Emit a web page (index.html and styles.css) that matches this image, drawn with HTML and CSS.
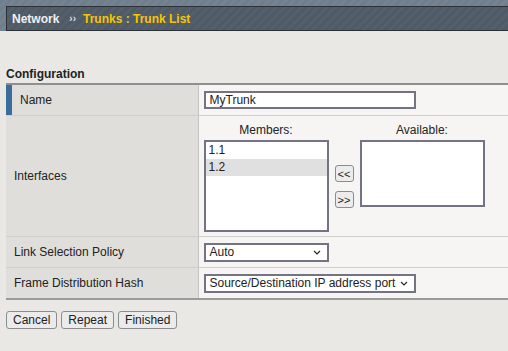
FILE: index.html
```html
<!DOCTYPE html>
<html>
<head>
<meta charset="utf-8">
<link rel="stylesheet" href="styles.css">
</head>
<body>
<div class="topbar">
  <div class="crumbs">
    <span class="crumb-root">Network</span>
    <span class="crumb-sep">››</span>
    <span class="crumb-page">Trunks : Trunk List</span>
  </div>
</div>
<div class="content">
  <div class="section-title">Configuration</div>
  <table class="config">
    <colgroup><col class="col-label"><col class="col-value"></colgroup>
    <tr class="row first">
      <td class="label marked">Name</td>
      <td class="value"><div class="textbox">MyTrunk</div></td>
    </tr>
    <tr class="row">
      <td class="label">Interfaces</td>
      <td class="value">
        <div class="picker">
          <div class="pick-col">
            <div class="pick-title">Members:</div>
            <div class="listbox members">
              <div class="opt">1.1</div>
              <div class="opt selected">1.2</div>
            </div>
          </div>
          <div class="move-col">
            <button class="move">&lt;&lt;</button>
            <button class="move">&gt;&gt;</button>
          </div>
          <div class="pick-col">
            <div class="pick-title">Available:</div>
            <div class="listbox available"></div>
          </div>
        </div>
      </td>
    </tr>
    <tr class="row">
      <td class="label">Link Selection Policy</td>
      <td class="value">
        <div class="dropdown short"><span>Auto</span>
          <svg class="chev" width="8" height="5" viewBox="0 0 8 5"><path d="M1 1 L4 4 L7 1" fill="none" stroke="#222" stroke-width="1.1"/></svg>
        </div>
      </td>
    </tr>
    <tr class="row last">
      <td class="label">Frame Distribution Hash</td>
      <td class="value">
        <div class="dropdown long"><span>Source/Destination IP address port</span>
          <svg class="chev" width="8" height="5" viewBox="0 0 8 5"><path d="M1 1 L4 4 L7 1" fill="none" stroke="#222" stroke-width="1.1"/></svg>
        </div>
      </td>
    </tr>
  </table>
  <div class="actions">
    <button class="btn">Cancel</button>
    <button class="btn">Repeat</button>
    <button class="btn">Finished</button>
  </div>
</div>
</body>
</html>
```
FILE: styles.css
```css
html, body {
  margin: 0;
  padding: 0;
  background: #e9e8e4;
  font-family: "Liberation Sans", Arial, sans-serif;
  font-size: 12px;
  color: #222;
  overflow: hidden;
}
.topbar {
  background: repeating-linear-gradient(135deg, #6f7e8d 0 3px, #74838f 3px 6px);
  padding: 6px 0 0 6px;
}
.crumbs {
  height: 23px;
  background: repeating-linear-gradient(135deg, #4e5a66 0 3px, #53606b 3px 6px);
  border-top: 1px solid #2c3035;
  border-bottom: 1px solid #2c3035;
  border-left: 1px solid #2c3035;
  display: flex;
  align-items: center;
  padding-left: 5px;
  font-weight: bold;
}
.crumb-root { color: #f0f0f0; }
.crumb-sep { color: #d8dde2; font-size: 10px; margin: 0 7px 0 10px; }
.crumb-page { color: #f7c600; }
.content {
  padding: 36px 0 0 6px;
}
.section-title {
  font-weight: bold;
  height: 16px;
  line-height: 14px;
}
.config {
  border-collapse: collapse;
  table-layout: fixed;
  width: 502px;
  border-top: 2px solid #8f8f8f;
  border-bottom: 2px solid #9b9b9b;
}
.col-label { width: 192px; }
.row td {
  border-top: 1px solid #cfcfcd;
  padding: 0;
}
.row.first td { border-top: none; }
.label {
  background: #dfdedb;
  border-right: 1px solid #c4c4c2;
  padding-left: 8px !important;
  height: 30px;
}
.label.marked {
  box-shadow: inset 6px 0 0 #3a6c9c;
  padding-left: 14px !important;
}
.value {
  background: #f6f5f3;
  padding-left: 5px !important;
}
.textbox {
  width: 200px;
  height: 14px;
  border: 2px solid #737384;
  background: #fff;
  padding: 0 4px;
  line-height: 14px;
}
.picker {
  display: flex;
  align-items: flex-start;
  padding: 8px 0 4px;
}
.pick-col {
  display: flex;
  flex-direction: column;
  align-items: center;
}
.pick-title {
  height: 16px;
  line-height: 12px;
}
.listbox {
  width: 121px;
  background: #fff;
  border: 2px solid #737384;
}
.listbox.members { height: 88px; }
.listbox.available { height: 63px; }
.opt {
  height: 17px;
  line-height: 17px;
  padding-left: 3px;
}
.opt.selected { background: #e0e0e0; }
.move-col {
  display: flex;
  flex-direction: column;
  gap: 9px;
  padding-top: 41px;
  margin: 0 6px 0 6px;
}
.move {
  width: 19px;
  height: 17px;
  padding: 0;
  border: 1px solid #8c8c8c;
  border-radius: 3px;
  background: #ececec;
  font-family: "Liberation Sans", Arial, sans-serif;
  font-size: 11px;
  color: #222;
  line-height: 14px;
}
.dropdown {
  position: relative;
  height: 15px;
  border: 2px solid #737384;
  background: #fff;
  padding: 0 4px;
  line-height: 15px;
}
.dropdown.short { width: 113px; }
.dropdown.long { width: 200px; }
.chev {
  position: absolute;
  right: 6px;
  top: 5px;
}
.actions {
  display: flex;
  gap: 4px;
  padding-top: 11px;
}
.btn {
  height: 18px;
  padding: 0 6px;
  border: 1px solid #8c8c8c;
  border-radius: 3px;
  background: #ebebeb;
  font-family: "Liberation Sans", Arial, sans-serif;
  font-size: 12px;
  color: #222;
  line-height: 15px;
}
```
